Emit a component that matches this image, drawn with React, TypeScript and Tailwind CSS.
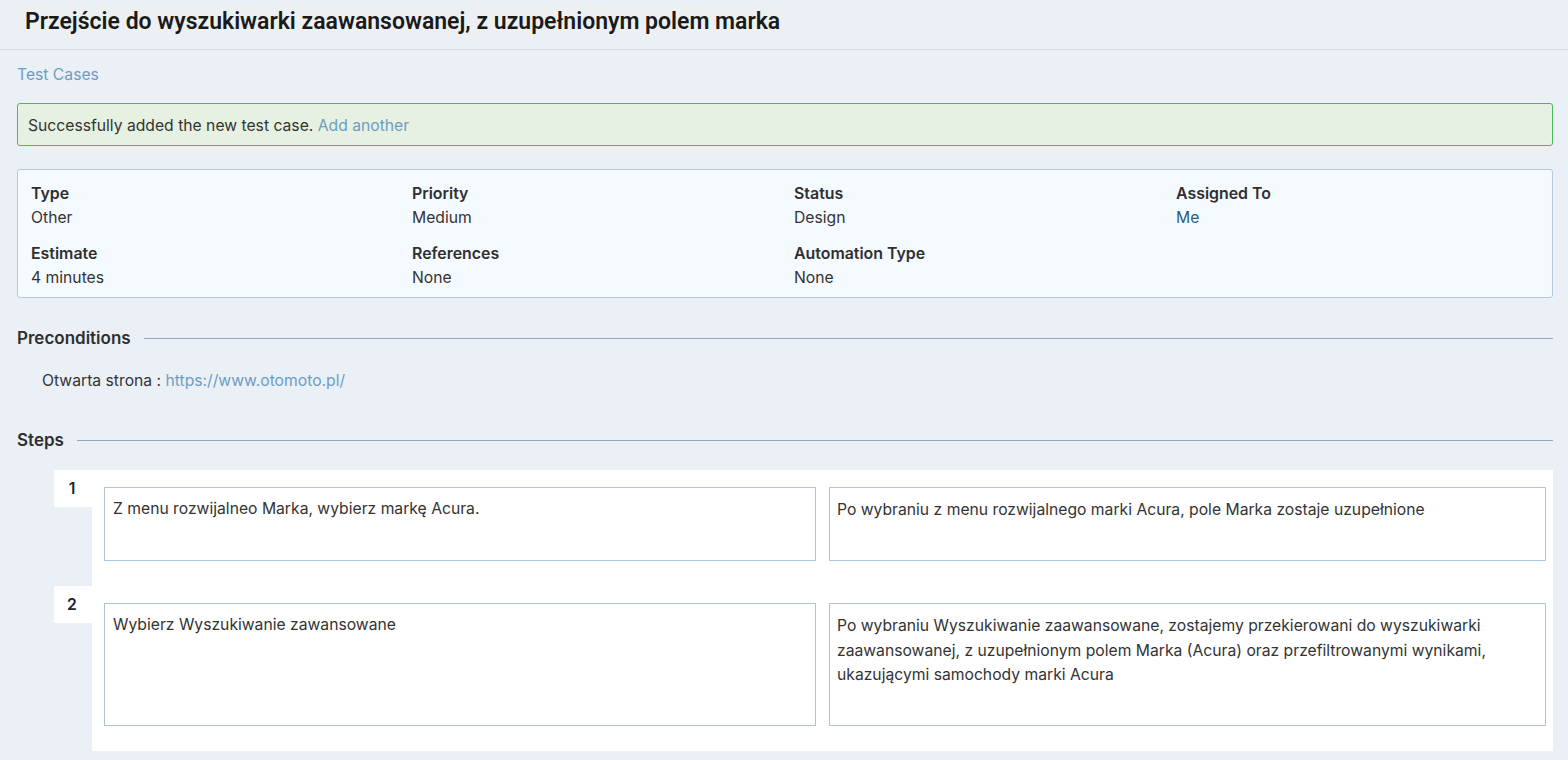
import React from "react";

const font = { fontFamily: "Inter, 'Noto Sans', sans-serif" };
const titleFont = { fontFamily: "Roboto, 'Noto Sans', sans-serif" };

function Field({ label, value, blue }: { label: string; value: string; blue?: boolean }) {
  return (
    <div className="flex flex-col">
      <div className="text-[15.9px] leading-[24px] font-semibold text-[#2f2f2f]">{label}</div>
      <div className={"text-[15.7px] leading-[24px] " + (blue ? "text-[#2c5a85]" : "text-[#333333]")}>{value}</div>
    </div>
  );
}

function SectionHeading({ title }: { title: string }) {
  return (
    <div className="flex items-center gap-[13px]">
      <div className="text-[17px] leading-[24px] font-semibold text-[#2f2f2f]">{title}</div>
      <div className="flex-1 h-px bg-[#8eaac5]" />
    </div>
  );
}

function StepRow({ n, left, right, h }: { n: number; left: React.ReactNode; right: React.ReactNode; h: string }) {
  return (
    <div className="flex">
      <div className="w-[38px] flex flex-col">
        <div className="h-[37px] bg-white flex items-center justify-center text-[15.7px] font-semibold text-[#1f1f2f] pr-[2px]">
          {n}
        </div>
      </div>
      <div className="flex-1 bg-white pt-[17px] pb-[25px] pl-[12px] pr-[7px] flex gap-[13px]">
        <div className={"w-[712px] border border-[#a9c6dc] px-[8px] pt-[9px] text-[15.7px] leading-[24.5px] text-[#333333] " + h}>
          {left}
        </div>
        <div className={"flex-1 border border-[#a9c6dc] px-[7px] pt-[10px] text-[15.7px] leading-[24.5px] text-[#333333] " + h}>
          {right}
        </div>
      </div>
    </div>
  );
}

export default function App() {
  return (
    <div className="min-h-[760px] bg-[#eaf0f6]" style={font}>
      <div className="h-[50px] border-b border-[#d3dbe4] pl-[17px] pt-[5px]">
        <div
          className="inline-flex items-center h-[34px] bg-[#edf0f3] px-[8px] text-[23px] font-semibold text-[#1a1a1a]"
          style={titleFont}
        >
          Przejście do wyszukiwarki zaawansowanej, z uzupełnionym polem marka
        </div>
      </div>
      <div className="pl-[17px] pr-[15px]">
        <div className="pt-[15px] text-[15.7px] leading-[20px] text-[#6e9cc5]">Test Cases</div>
        <div className="mt-[18px] h-[43px] rounded-[3px] border border-[#4cb95a] bg-[#e6f1e1] pl-[10px] pt-[2px] flex items-center text-[15.7px] text-[#333333]">
          Successfully added the new test case.&nbsp;<span className="text-[#6e9cc5]">Add another</span>
        </div>
        <div className="mt-[23px] rounded-[3px] border border-[#b3cbdf] bg-[#f5faff] pl-[13px] pt-[12px] pb-[7px]">
          <div className="grid grid-cols-[381px_382px_382px_1fr] gap-y-[12px]">
            <Field label="Type" value="Other" />
            <Field label="Priority" value="Medium" />
            <Field label="Status" value="Design" />
            <Field label="Assigned To" value="Me" blue />
            <Field label="Estimate" value="4 minutes" />
            <Field label="References" value="None" />
            <Field label="Automation Type" value="None" />
            <div />
          </div>
        </div>
        <div className="mt-[28px]">
          <SectionHeading title="Preconditions" />
        </div>
        <div className="mt-[19px] pl-[25px] text-[15.7px] leading-[24px] text-[#333333]">
          Otwarta strona : <span className="text-[#6e9cc5]">https://www.otomoto.pl/</span>
        </div>
        <div className="mt-[35px]">
          <SectionHeading title="Steps" />
        </div>
        <div className="mt-[18px] pl-[37px]">
          <StepRow
            n={1}
            h="h-[74px]"
            left="Z menu rozwijalneo Marka, wybierz markę Acura."
            right="Po wybraniu z menu rozwijalnego marki Acura, pole Marka zostaje uzupełnione"
          />
          <StepRow
            n={2}
            h="h-[123px]"
            left="Wybierz Wyszukiwanie zawansowane"
            right={
              <>
                Po wybraniu Wyszukiwanie zaawansowane, zostajemy przekierowani do wyszukiwarki
                <br />
                zaawansowanej, z uzupełnionym polem Marka (Acura) oraz przefiltrowanymi wynikami,
                <br />
                ukazującymi samochody marki Acura
              </>
            }
          />
        </div>
      </div>
    </div>
  );
}
